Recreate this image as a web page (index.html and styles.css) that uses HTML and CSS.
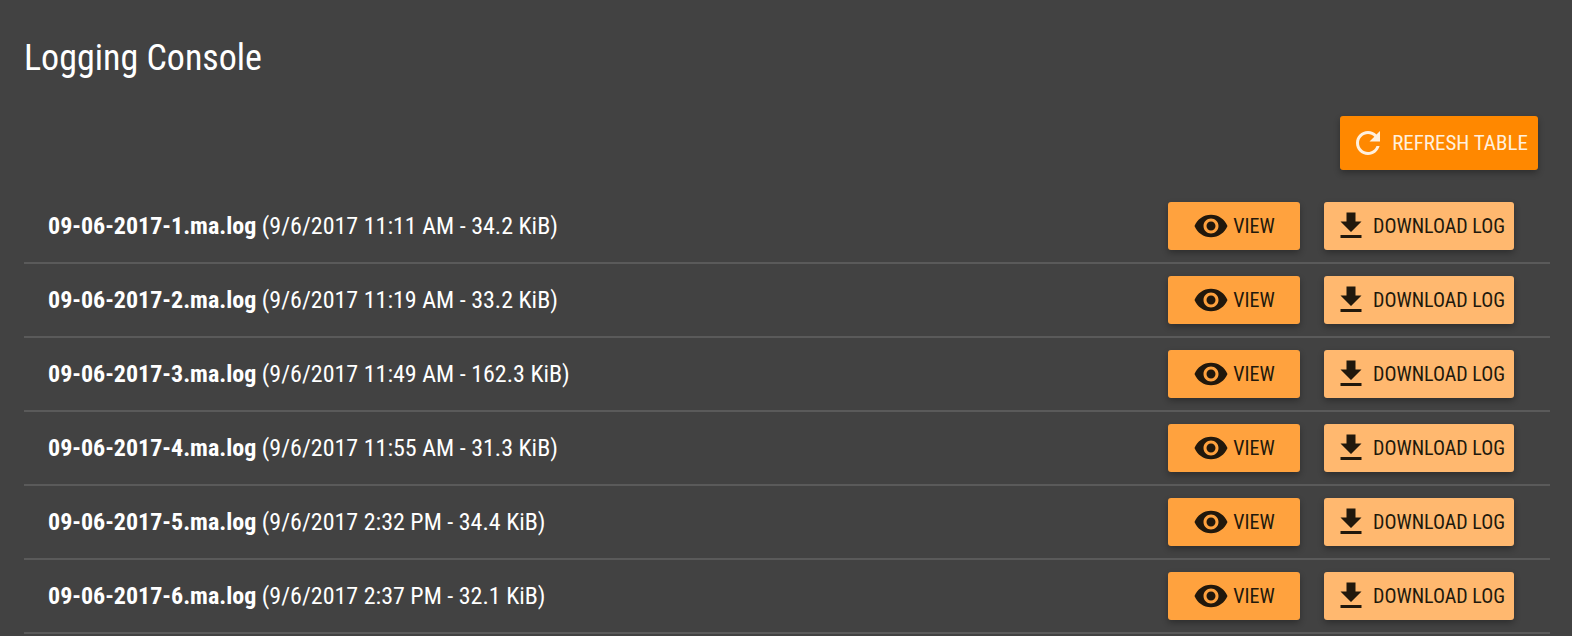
FILE: index.html
```
<!DOCTYPE html>
<html lang="en">
<head>
<meta charset="utf-8">
<title>Logging Console</title>
<link rel="stylesheet" href="styles.css">
</head>
<body>
<svg class="sprite" aria-hidden="true">
  <symbol id="icon-refresh" viewBox="0 0 24 24"><path d="M17.65 6.35C16.2 4.9 14.21 4 12 4c-4.42 0-7.99 3.58-7.99 8s3.57 8 7.99 8c3.73 0 6.84-2.55 7.73-6h-2.08c-.82 2.33-3.04 4-5.65 4-3.31 0-6-2.69-6-6s2.69-6 6-6c1.66 0 3.14.69 4.22 1.78L13 11h7V4l-2.35 2.35z"/></symbol>
  <symbol id="icon-eye" viewBox="0 0 24 24"><path d="M12 4.5C7 4.5 2.73 7.61 1 12c1.73 4.39 6 7.5 11 7.5s9.27-3.11 11-7.5c-1.73-4.39-6-7.5-11-7.5zM12 17c-2.76 0-5-2.24-5-5s2.24-5 5-5 5 2.24 5 5-2.24 5-5 5zm0-8c-1.66 0-3 1.34-3 3s1.34 3 3 3 3-1.34 3-3-1.34-3-3-3z"/></symbol>
  <symbol id="icon-download" viewBox="0 0 24 24"><path d="M19 9h-4V3H9v6H5l7 7 7-7zM5 18v2h14v-2H5z"/></symbol>
</svg>
<main class="console">
  <h1 class="title">Logging Console</h1>
  <div class="toolbar">
    <button class="button button-refresh" type="button"><svg class="icon" aria-hidden="true"><use href="#icon-refresh"/></svg>REFRESH TABLE</button>
  </div>
  <ul class="logs">
    <li class="log">
      <span class="name"><b>09-06-2017-1.ma.log</b> (9/6/2017 11:11 AM - 34.2 KiB)</span>
      <button class="button button-view" type="button"><svg class="icon" aria-hidden="true"><use href="#icon-eye"/></svg>VIEW</button>
      <button class="button button-download" type="button"><svg class="icon" aria-hidden="true"><use href="#icon-download"/></svg>DOWNLOAD LOG</button>
    </li>
    <li class="log">
      <span class="name"><b>09-06-2017-2.ma.log</b> (9/6/2017 11:19 AM - 33.2 KiB)</span>
      <button class="button button-view" type="button"><svg class="icon" aria-hidden="true"><use href="#icon-eye"/></svg>VIEW</button>
      <button class="button button-download" type="button"><svg class="icon" aria-hidden="true"><use href="#icon-download"/></svg>DOWNLOAD LOG</button>
    </li>
    <li class="log">
      <span class="name"><b>09-06-2017-3.ma.log</b> (9/6/2017 11:49 AM - 162.3 KiB)</span>
      <button class="button button-view" type="button"><svg class="icon" aria-hidden="true"><use href="#icon-eye"/></svg>VIEW</button>
      <button class="button button-download" type="button"><svg class="icon" aria-hidden="true"><use href="#icon-download"/></svg>DOWNLOAD LOG</button>
    </li>
    <li class="log">
      <span class="name"><b>09-06-2017-4.ma.log</b> (9/6/2017 11:55 AM - 31.3 KiB)</span>
      <button class="button button-view" type="button"><svg class="icon" aria-hidden="true"><use href="#icon-eye"/></svg>VIEW</button>
      <button class="button button-download" type="button"><svg class="icon" aria-hidden="true"><use href="#icon-download"/></svg>DOWNLOAD LOG</button>
    </li>
    <li class="log">
      <span class="name"><b>09-06-2017-5.ma.log</b> (9/6/2017 2:32 PM - 34.4 KiB)</span>
      <button class="button button-view" type="button"><svg class="icon" aria-hidden="true"><use href="#icon-eye"/></svg>VIEW</button>
      <button class="button button-download" type="button"><svg class="icon" aria-hidden="true"><use href="#icon-download"/></svg>DOWNLOAD LOG</button>
    </li>
    <li class="log">
      <span class="name"><b>09-06-2017-6.ma.log</b> (9/6/2017 2:37 PM - 32.1 KiB)</span>
      <button class="button button-view" type="button"><svg class="icon" aria-hidden="true"><use href="#icon-eye"/></svg>VIEW</button>
      <button class="button button-download" type="button"><svg class="icon" aria-hidden="true"><use href="#icon-download"/></svg>DOWNLOAD LOG</button>
    </li>
  </ul>
</main>
</body>
</html>
```
FILE: styles.css
```
* {
  box-sizing: border-box;
}

body {
  margin: 0;
  background: #424242;
  color: #fff;
  font-family: "Roboto Condensed", Roboto, sans-serif;
}

.sprite {
  display: none;
}

.console {
  padding: 34px 22px 0 24px;
}

.title {
  margin: 0;
  font-size: 36px;
  font-weight: 400;
  line-height: 48px;
}

.toolbar {
  display: flex;
  justify-content: flex-end;
  padding: 34px 12px 20px 0;
}

.logs {
  margin: 0;
  padding: 0;
  list-style: none;
}

.log {
  display: flex;
  align-items: center;
  gap: 24px;
  padding: 12px 36px 12px 24px;
  border-bottom: 2px solid #5a5a5a;
}

.name {
  flex: 1;
  font-size: 24px;
  line-height: 32px;
}

.button {
  display: flex;
  align-items: center;
  justify-content: center;
  gap: 4px;
  height: 48px;
  padding: 0 9px;
  border: 0;
  border-radius: 3px;
  box-shadow: 0 3px 6px rgba(0, 0, 0, 0.3);
  color: #21180c;
  font-family: inherit;
  font-size: 20px;
  line-height: 24px;
  white-space: nowrap;
  cursor: pointer;
}

.button-refresh {
  gap: 6px;
  min-width: 198px;
  height: 54px;
  background: #ff8800;
  color: #fff0de;
  font-size: 21px;
}

.button-view {
  min-width: 132px;
  background: #ffa23e;
}

.button-download {
  min-width: 190px;
  background: #ffb86f;
}

.icon {
  flex: none;
  width: 36px;
  height: 36px;
  fill: currentColor;
}
```
